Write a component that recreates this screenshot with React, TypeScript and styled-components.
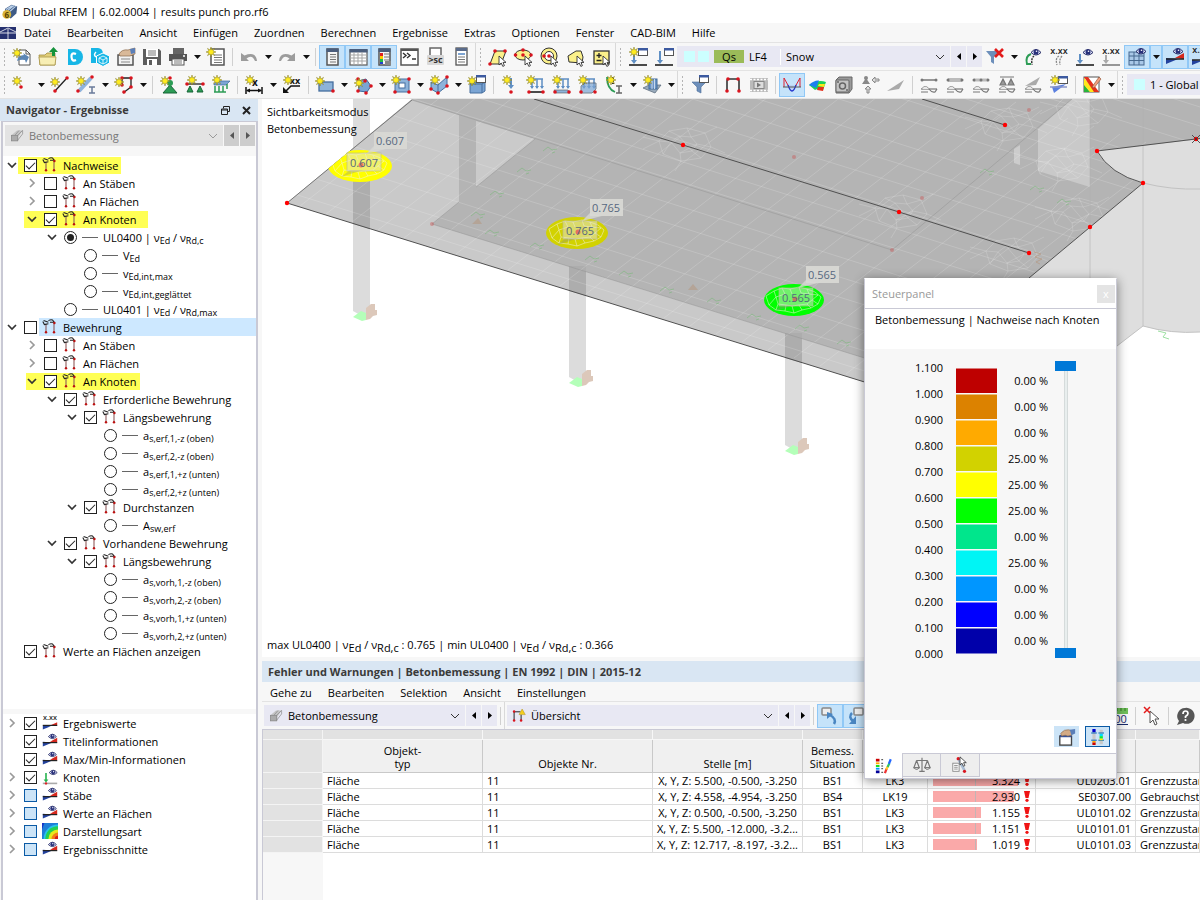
import React from "react";
import styled, { createGlobalStyle, css } from "styled-components";

const FONT = `"Open Sans", "Noto Sans", sans-serif`;
const BAR = "#f7f7f7";
const FRAME = "#c9c9d5";
const FIELD = "#e8e8f3";
const HEAD = "#d9e6f3";
const ACTIVE = "#c5e3fa";
const ACTIVE_EDGE = "#90c8f6";

const Global = createGlobalStyle`
  * { box-sizing: border-box; }
  body { margin: 0; background: ${BAR}; font-family: ${FONT}; font-size: 11px; color: #000; overflow: hidden; }
  button, select, input { font: inherit; color: inherit; margin: 0; padding: 0; border: 0; background: none; border-radius: 0; }
  h1, h2, p, ul { margin: 0; padding: 0; font-size: inherit; font-weight: inherit; list-style: none; }
  svg { display: block; flex: none; overflow: visible; }
`;

/* ---------- icons ---------- */

const Star = ({ x = 0, y = 0 }: { x?: number; y?: number }) => (
  <path
    transform={`translate(${x} ${y})`}
    d="M5 0l.9 3 2.6-1.6L7 4l3 1-3 .9 1.5 2.7L5.9 7 5 10l-.9-3-2.6 1.6L3 5.9 0 5l3-1L1.5 1.4 4.1 3z"
    fill="#ffec1f"
    stroke="#7d7426"
    strokeWidth=".5"
  />
);
const Dot = ({ x, y }: { x: number; y: number }) => <circle cx={x} cy={y} r="1.8" fill="#d9141e" />;
const Eye = ({ x = 9, y = 0 }: { x?: number; y?: number }) => (
  <g transform={`translate(${x} ${y})`}>
    <path d="M0 4.5Q5-1.5 10 4.5Q5 9.5 0 4.5z" fill="#dfe3fb" stroke="#1e2560" />
    <circle cx="5" cy="4" r="2.500" fill="#28307a" />
    <circle cx="5.500" cy="3.300" r=".8" fill="#fff" />
  </g>
);
const Cursor = ({ x = 11, y = 9 }: { x?: number; y?: number }) => (
  <path transform={`translate(${x} ${y})`} d="M0 0v9l2.200-2 1.600 3.400 1.600-.7L4 6.400h3z" fill="#fff" stroke="#333" strokeWidth=".9" />
);
const Arrow = ({ x, y, h = 9, c = "#5f8fc4" }: { x: number; y: number; h?: number; c?: string }) => (
  <path transform={`translate(${x} ${y})`} d={`M-1 0h2v${h - 4}h2l-3 4-3-4h2z`} fill={c} />
);
const Win = ({ x = 10, y = 1 }: { x?: number; y?: number }) => (
  <g transform={`translate(${x} ${y})`}>
    <rect x=".5" y=".5" width="9" height="7" fill="#fff" stroke="#555" />
    <rect x="0" y="0" width="10" height="2.500" fill="#3c5aa0" />
  </g>
);
const Xxx = ({ y = 7 }: { y?: number }) => (
  <text x="10" y={y} fontSize="9" fontWeight="600" textAnchor="middle" fill="#222">x.xx</text>
);
const Loads = ({ a = 0 }: { a?: number }) => (
  <>
    <path d="M4 4h13M6 4v9M11 4v9M16 4v9" stroke="#5f8fc4" strokeWidth="1.500" fill="none" />
    <path d="M4 11l2 3 2-3zM9 11l2 3 2-3zM14 11l2 3 2-3z" fill="#5f8fc4" />
    {a === 0 && <path d="M3 17h14" stroke="#111" strokeWidth="1.500" />}
    {a === 1 && <path d="M2 15h14l2 3H4z" fill="#8db3da" stroke="#555" strokeWidth=".6" />}
    {a === 2 && <path d="M3 11l4-3h11v6l-4 4H3z" fill="#7ba5d4" opacity=".7" stroke="#456" />}
    <Dot x={3} y={17} />
    <Dot x={17} y={17} />
  </>
);
const Beam = ({ top }: { top: React.ReactNode }) => (
  <>
    {top}
    <path d="M2 14h16" stroke="#777" strokeWidth="1.200" />
    <path d="M3 14q3-5 7 0 3 4 6 3l2-3" fill="none" stroke="#777" strokeWidth="1.200" />
    <path d="M3 14q3-5 7 0z" fill="#e8e8e8" />
    <path d="M2 17h7" stroke="#777" />
  </>
);

const icons: Record<string, React.ReactNode> = {
  new: (<><path d="M7 3h7l4 4v11H7z" fill="#fff" stroke="#555" /><path d="M14 3v4h4" fill="none" stroke="#555" /><path d="M5 14q1-6 7-6l-1-2 6 4-3 6-1-3q-4-1-8 1z" fill="#5b86b5" /><Star x={0} y={1} /></>),
  open: (<><path d="M1 8h6l2-2h8v12H2z" fill="#e2cf79" stroke="#a08a3c" strokeWidth=".8" /><path d="M1 10h17l-1 8H2z" fill="#f7eeb4" stroke="#a89447" strokeWidth=".8" /><path d="M14 9V5h-3l4.500-5L20 5h-3v4z" fill="#15933c" /></>),
  dl: (<><path d="M4 2h7a8 8 0 0 1 0 16H4z" fill="#17b6e6" /><path d="M12 13q-4 2-4.500-3T12 7" fill="none" stroke="#fff" strokeWidth="2.200" /></>),
  cube: (<><path d="M1 1h7a6 6 0 0 1 5 5L8 16H1z" fill="#17b6e6" /><path d="M6 10q-3-2 0-5" fill="none" stroke="#fff" strokeWidth="1.500" /><path d="M13 6l6.500 3v7l-6.500 3.500L6.500 16V9z" fill="#17b6e6" stroke="#fff" /><path d="M13 9l4 2v4l-4 2-4-2v-4zM9 11l4 2 4-2M13 13v4" fill="none" stroke="#fff" strokeWidth=".8" /></>),
  boxhand: (<><rect x="2" y="8" width="15" height="10" fill="#f2f2f2" stroke="#555" strokeWidth="1.500" /><path d="M5 12h9M5 15h9" stroke="#888" /><path d="M3 7q3-5 9-4l7-2v6l-5 2H9L4 9z" fill="#d9b999" stroke="#8a6b4f" strokeWidth=".7" /><path d="M14 2l5-1v5l-4 1z" fill="#5b7fb8" /></>),
  winhand: (<><rect x="2" y="9" width="13" height="10" fill="#fff" stroke="#444" strokeWidth="1.500" /><path d="M2 9h13" stroke="#35519a" strokeWidth="2.500" /><path d="M3 6q4-5 9-4l3 1v5l-4 1-3-1-4 1z" fill="#d3ab86" stroke="#8a6b4f" strokeWidth=".7" /><path d="M13 2l6-1v5l-4 2z" fill="#5b7fb8" /></>),
  save: (<><path d="M1 2h16l2 2v14H1z" fill="#5d5d5d" /><rect x="4" y="2" width="12" height="8" fill="#fff" /><path d="M6 4h8M6 6h8M6 8h8" stroke="#777" /><rect x="5" y="12" width="10" height="6" fill="#fff" /><rect x="7" y="13" width="3" height="5" fill="#5d5d5d" /></>),
  print: (<><rect x="5" y="1" width="11" height="6" fill="#666" /><path d="M1 7h18v7H1z" fill="#555" /><rect x="4" y="12" width="12" height="6" fill="#fff" stroke="#555" /><path d="M6 14h8M6 16h8" stroke="#777" /><circle cx="16" cy="9" r="1" fill="#fff" /></>),
  report: (<><rect x="5" y="2" width="13" height="16" fill="#fff" stroke="#555" strokeWidth="1.500" /><path d="M8 8h8M8 10.500h8M8 13h8M8 15.500h8" stroke="#777" /><Star x={0} y={0} /></>),
  undo: (<path d="M2 6v8h8L7.500 11.500Q13 7 16 14h2Q17 4 5.500 8.500z" fill="#9c9c9c" />),
  redo: (<path d="M18 6v8h-8l2.500-2.500Q7 7 4 14H2Q3 4 14.500 8.500z" fill="#9c9c9c" />),
  nav: (<><rect x="5" y="2" width="11" height="16" fill="#f4f4f4" stroke="#555" strokeWidth="1.500" /><rect x="4.500" y="1.500" width="12" height="3.500" fill="#4a5d7c" /><path d="M8 7.500h6M8 10h6M8 12.500h6M8 15h6" stroke="#777" /></>),
  table: (<><rect x="2" y="3" width="17" height="15" fill="#fff" stroke="#666" strokeWidth="1.300" /><rect x="1.500" y="2" width="18" height="3.500" fill="#4a5d7c" /><path d="M2 8h17M2 11h17M2 14h17M6 5v13M10 5v13M14 5v13" stroke="#a5a5a5" /></>),
  panel: (<><rect x="5" y="2" width="11" height="16" fill="#f4f4f4" stroke="#555" strokeWidth="1.500" /><rect x="4.500" y="1.500" width="12" height="3.500" fill="#4a5d7c" /><rect x="6" y="6" width="3" height="3" fill="#d22" /><rect x="6" y="9" width="3" height="3" fill="#fc0" /><rect x="6" y="12" width="3" height="3" fill="#2b4" /><rect x="6" y="15" width="3" height="2" fill="#24c" /><path d="M10 7h5M10 10h5M10 13h5" stroke="#777" /><rect x="11" y="14" width="6" height="4" fill="#888" /></>),
  console: (<><rect x="1" y="2" width="17" height="16" fill="#fff" stroke="#555" strokeWidth="1.500" /><path d="M1 3h17" stroke="#555" strokeWidth="2" /><path d="M3 6l3 2.500L3 11M7 6l3 2.500L7 11M12 12h4" fill="none" stroke="#333" strokeWidth="1.400" /></>),
  script: (<><rect x="4" y="1" width="11" height="8" fill="#fff" stroke="#666" strokeWidth="1.500" /><rect x="1" y="8" width="17" height="10" rx="1" fill="#d8d8d8" /><text x="9.500" y="16" fontSize="9" fontWeight="700" textAnchor="middle" fill="#333">&gt;sc</text></>),
  list: (<><rect x="4" y="1" width="11" height="17" fill="#fff" stroke="#555" strokeWidth="1.300" /><rect x="4" y="1" width="11" height="3" fill="#5a6b8a" /><rect x="6" y="6" width="7" height="2" fill="#7da4d2" /><path d="M6 10h7M6 12.500h7M6 15h7" stroke="#777" /></>),
  selPar: (<><path d="M7 4h11l-5 13H2z" fill="#fbf08a" stroke="#333" /><Dot x={7} y={4} /><Dot x={17} y={4} /><Dot x={2} y={17} /><Cursor /></>),
  selEll: (<><ellipse cx="9" cy="8" rx="8" ry="5" fill="#fbf08a" stroke="#333" /><Dot x={9} y={3} /><Dot x={1.500} y={8} /><Dot x={17} y={8} /><Dot x={9} y={8} /><Cursor /></>),
  selRing: (<><circle cx="9" cy="9" r="8" fill="#fbf08a" stroke="#333" /><circle cx="9" cy="9" r="4.500" fill="#fff" stroke="#333" /><Dot x={9} y={9} /><Dot x={4} y={9} /><Cursor /></>),
  selPoly: (<><path d="M2 9l8-5h5l2 6-1 6-13-1z" fill="#fbf08a" stroke="#333" /><Cursor /></>),
  selPm: (<><rect x="2" y="4" width="15" height="13" fill="#fbf08a" stroke="#333" strokeWidth="1.300" /><path d="M7 6v5M4.500 8.500h5M4.500 13.500h5" stroke="#222" strokeWidth="1.300" /><Cursor /></>),
  loadNew: (<><Arrow x={6} y={6} h={11} /><Win /><path d="M1 18h18" stroke="#111" strokeWidth="1.500" /><Star x={1} y={0} /></>),
  loadWin: (<><Arrow x={6} y={4} h={13} /><Win /><path d="M1 18h18" stroke="#111" strokeWidth="1.500" /></>),
  filterX: (<><path d="M1 4h13l-5 6v7l-3-2v-5z" fill="#6d8fbb" /><path d="M10 2l8 8M18 2l-8 8" stroke="#e31b1b" strokeWidth="2.600" /></>),
  eyeRebar: (<><path d="M8 7q-6 2-4 10h4" fill="none" stroke="#2c9c55" strokeWidth="2" /><path d="M11 9q-3 2-2 9" fill="none" stroke="#333" strokeWidth="1.500" strokeDasharray="2 1" /><Eye x={8} y={1} /></>),
  xxxRebar: (<><Xxx /><path d="M10 9q-4 2-2 9M13 9q-3 3-2 9" fill="none" stroke="#888" strokeWidth="1.300" strokeDasharray="2 1" /></>),
  eyeLoad: (<><Arrow x={5} y={7} h={10} /><path d="M1 18h18" stroke="#111" strokeWidth="1.500" /><Eye x={8} y={1} /></>),
  xxxLoad: (<><Xxx /><Arrow x={5} y={8} h={9} c="#aaa" /><path d="M1 18h18" stroke="#777" strokeWidth="1.500" /></>),
  eyeGrid: (<><rect x="2" y="5" width="15" height="13" fill="#a9c8e8" stroke="#47698f" /><path d="M2 9h15M2 13.500h15M7 5v13M12 5v13" stroke="#47698f" /><Eye x={9} y={0} /></>),
  eyeDiag: (<><path d="M1 11v6l12-5z" fill="#23439f" /><path d="M10 11l9-5v6z" fill="#d5281e" /><path d="M1 12h18" stroke="#222" strokeWidth="1.500" /><Eye x={8} y={0} /></>),
  xxxDiag: (<><Xxx y={6} /><path d="M1 13v5l10-4z" fill="#23439f" /><path d="M10 13l9-4v4z" fill="#d5281e" /><path d="M1 13h18" stroke="#222" strokeWidth="1.500" /></>),
  node: (<><Star x={0} y={1} /><Dot x={9} y={12} /></>),
  line: (<><path d="M5 16L16 4" stroke="#222" strokeWidth="1.300" /><Dot x={5} y={16} /><Dot x={17} y={3} /><Star x={0} y={2} /></>),
  member: (<><path d="M3 16L15 3" stroke="#8fb3dc" strokeWidth="4" /><Dot x={2} y={16} /><Dot x={16} y={2} /><path d="M13 12h6M13 18h6M16 12v6" stroke="#6a7b9a" strokeWidth="1.500" /><Star x={0} y={1} /></>),
  polyline: (<><path d="M8 10V3h9v9l-8 6" fill="none" stroke="#222" strokeWidth="1.300" /><Dot x={8} y={10} /><Dot x={8} y={3} /><Dot x={17} y={3} /><Dot x={17} y={12} /><Dot x={10} y={17} /><Star x={0} y={2} /></>),
  support: (<><path d="M4 18l7-8 7 8z" fill="#2c9c55" stroke="#176437" /><circle cx="11" cy="8" r="3" fill="#2c9c55" /><Dot x={11} y={3} /><Star x={1} y={1} /></>),
  lineSup: (<><path d="M3 9h15" stroke="#222" strokeWidth="1.300" /><path d="M2 17l3-6 3 6zM12 17l3-6 3 6z" fill="#2c9c55" stroke="#176437" /><Dot x={2} y={9} /><Dot x={18} y={9} /><Star x={2} y={0} /></>),
  surfSup: (<><path d="M3 9l4-3h12l-4 4H3z" fill="#7ba5d4" stroke="#3e6a9c" strokeWidth=".7" /><path d="M4 17v-6M8 17v-6M12 17v-6M16 14V9M3 17h12" stroke="#2c9c55" strokeWidth="1.500" /><Star x={1} y={0} /></>),
  dim: (<><path d="M2 12v7M18 12v7M3 15.500h14" stroke="#111" strokeWidth="1.500" /><path d="M2 15.500l4-2v4zM18 15.500l-4-2v4z" fill="#111" /><text x="11" y="11" fontSize="10" fontWeight="700" fill="#111" textAnchor="middle">x</text><Star x={1} y={0} /></>),
  dimArrow: (<><path d="M18 11H9l-6 6" fill="none" stroke="#111" strokeWidth="1.500" /><path d="M1 18v-6l6 6z" fill="#111" /><text x="13" y="9" fontSize="9" fontWeight="700" fill="#111" textAnchor="middle">xx</text><Star x={1} y={0} /></>),
  surf: (<><rect x="4" y="7" width="14" height="9" fill="#8db3da" stroke="#466f9f" strokeWidth="1.300" /><Dot x={18} y={16} /><Star x={0} y={1} /></>),
  surfPoly: (<><path d="M5 6l8-2 5 7-4 6-8-1z" fill="#7ba5d4" stroke="#3e6a9c" /><Dot x={5} y={16} /><Dot x={13} y={18} /><Dot x={18} y={11} /><Dot x={5} y={4} /><Dot x={12} y={6} /><Star x={1} y={3} /></>),
  opening: (<><rect x="4" y="4" width="14" height="13" fill="#8db3da" stroke="#466f9f" /><rect x="8" y="8" width="6" height="5" fill="#fff" stroke="#466f9f" /><Dot x={4} y={17} /><Dot x={18} y={4} /><Dot x={18} y={17} /><Star x={0} y={0} /></>),
  surf3d: (<><path d="M2 7l7 3 9-8v9l-9 7-7-4z" fill="#8db3da" stroke="#466f9f" /><path d="M9 10v8" stroke="#466f9f" /><Dot x={2} y={14} /><Dot x={9} y={18} /><Dot x={18} y={11} /><Dot x={18} y={2} /><Star x={1} y={0} /></>),
  solid: (<><path d="M3 9l3-2h12v9l-3 2H3z" fill="#7ba5d4" stroke="#466f9f" /><path d="M3 9h12v9M15 9l3-2" fill="none" stroke="#466f9f" /><Win x={9} y={0} /><Star x={0} y={1} /></>),
  nLoad: (<><Arrow x={11} y={3} h={11} /><Dot x={11} y={17} /><Star x={2} y={0} /></>),
  lLoad: (<><Loads /><Star x={0} y={0} /></>),
  sLoad: (<><Loads a={1} /><Star x={0} y={0} /></>),
  vLoad: (<><Loads a={2} /><Star x={0} y={0} /></>),
  impf: (<><path d="M3 2q0 12 8 15" fill="none" stroke="#2c9c55" strokeWidth="1.800" /><path d="M9 2v7" stroke="#333" strokeDasharray="2 1" strokeWidth="2" /><path d="M12 11h6M12 18h6M15 11v7" stroke="#666" strokeWidth="1.500" /><Star x={2} y={0} /></>),
  free: (<><path d="M1 13l6-3h12l-6 8z" fill="#9ab" stroke="#567" strokeWidth=".7" /><rect x="7" y="4" width="8" height="10" fill="#6e96c6" stroke="#3e6a9c" /><path d="M10 4v10M12.500 4v10" stroke="#dfeaf6" strokeWidth=".8" /><Star x={1} y={0} /></>),
  filterWin: (<><path d="M2 7h14l-5 5v6l-4-2v-4z" fill="#6d8fbb" stroke="#4b6d99" strokeWidth=".6" /><Win x={9} y={0} /></>),
  frame: (<><path d="M4 17V6q0-2 2-2h8q2 0 2 2v11" fill="none" stroke="#333" strokeWidth="1.600" /><Dot x={4} y={16} /><Dot x={16} y={16} /><Dot x={5} y={4} /><Dot x={15} y={4} /></>),
  film: (<><rect x="1" y="3" width="18" height="14" fill="#bbb" /><path d="M1 4.500h18M1 15.500h18" stroke="#fff" strokeWidth="1.500" strokeDasharray="2 1.500" /><rect x="5" y="6.500" width="10" height="7" fill="#ddd" stroke="#888" /><path d="M8 7.500v5l4-2.500z" fill="#777" /></>),
  results: (<><path d="M2 3v9M2 3l5 9M18 3v9M18 3l-5 9" stroke="#dd2233" fill="none" /><path d="M6 10q4 12 8 0" fill="#bcd3f5" stroke="#2233cc" strokeWidth="1.300" /><path d="M1 12h18" stroke="#555" /></>),
  iso: (<><path d="M1 10q9-6 17-3l-3 8q-5-2-8 0z" fill="#1ad15a" /><path d="M1 10q5-5 10-4.500L8 13z" fill="#1b7ef0" /><path d="M11 9l6 0-1 3-6-1z" fill="#ffe71a" /><path d="M10 12l6 0-1 4-6-1z" fill="#e5301c" /></>),
  dice: (<><path d="M2 5l3-3h13v12l-3 4H2z" fill="#999" stroke="#666" /><rect x="2" y="5" width="13" height="12" rx="1" fill="#c4c4c4" stroke="#666" /><circle cx="8.500" cy="11" r="3" fill="none" stroke="#666" strokeWidth="1.500" /><circle cx="4" cy="7" r="1" fill="#666" /><circle cx="13" cy="15" r="1" fill="#666" /></>),
  react: (<><path d="M2 9l4-6 4 6z" fill="#888" /><circle cx="6" cy="3" r="2" fill="#888" /><path d="M19 4h-4V2l-3 3 3 3V6h4zM7 18v-4H5l3-3 3 3H9v4z" fill="#ddd" stroke="#888" /></>),
  wedge: (<path d="M1 16L18 5l-5 9-6 1z" fill="#aaa" />),
  b1: <Beam top={<><path d="M3 5h14" stroke="#777" strokeWidth="1.500" /><circle cx="3" cy="5" r="1.500" fill="#777" /><circle cx="17" cy="5" r="1.500" fill="#777" /></>} />,
  b2: <Beam top={<><path d="M3 5h14" stroke="#bbb" strokeWidth="4" /><circle cx="3" cy="5" r="1.500" fill="#777" /><circle cx="17" cy="5" r="1.500" fill="#777" /></>} />,
  b3: <Beam top={<><path d="M3 5h14" stroke="#bbb" strokeWidth="3" /><circle cx="3" cy="5" r="1.500" fill="#777" /><circle cx="10" cy="5" r="1.500" fill="#777" /><circle cx="17" cy="5" r="1.500" fill="#777" /></>} />,
  b4: <Beam top={<><path d="M3 2h14M3 10l3-6 3 6zM11 10l3-6 3 6z" stroke="#777" fill="#999" strokeWidth="1.200" /></>} />,
  b5: <Beam top={<path d="M2 11L17 2l-4 8z" fill="#aaa" />} />,
  b6: (<><Win x={9} y={1} /><path d="M3 12l14-3-12 9z" fill="#5a7fe0" /><path d="M1 12h17" stroke="#8a94c8" strokeWidth="1.500" /><Star x={1} y={0} /></>),
  palette: (<><rect x="2" y="2" width="15" height="15" fill="#fff" stroke="#555" /><path d="M2 9v8h6z" fill="#28b43c" /><path d="M2 3v7l6 7h6z" fill="#ffe71a" /><path d="M2 2l10 15h5L6 2z" fill="#e5301c" /><path d="M10 12l7-10 2 2-7 9z" fill="#f0a080" stroke="#8a4b2c" strokeWidth=".6" /></>),
  truss: (<><path d="M5 6v10M15 5v11" stroke="#8a5555" strokeWidth="1.300" /><path d="M1 3l2 4 5-1M2 2l6 2M8 2q4-2 6 0M10 4h6M13 1l3 4" fill="none" stroke="#222" strokeWidth="1.300" /><circle cx="5" cy="16.500" r="1.500" fill="#b11" /><circle cx="15" cy="16.500" r="1.500" fill="#b11" /><circle cx="15.500" cy="5" r="1.500" fill="#b11" /></>),
  eyeNode: (<><Arrow x={5} y={5} h={12} c="#27b34f" /><path d="M1 18h18" stroke="#aaa" strokeWidth="2" /><circle cx="5" cy="18" r="1.500" fill="#d22" /><Eye x={9} y={0} /></>),
  contour: (<><rect width="20" height="20" fill="#1737c8" /><path d="M2 20A18 18 0 0 1 20 2v18z" fill="#27c4e8" /><path d="M4 20A16 16 0 0 1 20 4v16z" fill="#24d052" /><path d="M8 20A12 12 0 0 1 20 8v12z" fill="#e8ea1c" /><path d="M12 20a8 8 0 0 1 8-8v8z" fill="#f57c1a" /><path d="M16 20a4 4 0 0 1 4-4v4z" fill="#d81c1c" /><path d="M3 0h17v3Q6 3 4 20H0V8z" fill="#27c4e8" opacity=".5" /></>),
  concrete: (<><path d="M2 9l8-7h8l-6 9v6H2z" fill="#c4c4c4" /><rect x="2" y="9" width="9" height="8" fill="#ababab" stroke="#888" /><path d="M11 9l7-7v5l-7 9M7 9l6-7" fill="none" stroke="#888" /></>),
  overview: (<><path d="M3 16V4h9M13 8v8" fill="none" stroke="#222" strokeWidth="1.400" /><Dot x={3} y={3.5} /><Dot x={3} y={16.5} /><Dot x={13} y={16.5} /><path d="M10 8l4.500-8L19 8z" fill="#f5cf1f" stroke="#a08512" strokeWidth=".6" /></>),
  jumpUp: (<><rect x="2" y="2" width="9" height="7" rx="1" fill="#eee" stroke="#888" strokeWidth="1.500" /><path d="M14 18q3-5-4-9" fill="none" stroke="#4a86c2" strokeWidth="2.500" /><path d="M7 6v7l6-5z" fill="#4a86c2" /></>),
  jumpDown: (<><rect x="8" y="2" width="9" height="7" rx="1" fill="#eee" stroke="#888" strokeWidth="1.500" /><path d="M6 7q-4 4 1 8" fill="none" stroke="#4a86c2" strokeWidth="2.500" /><path d="M10 10v8H3z" fill="#4a86c2" /></>),
  decimals: (<><rect x="1" y="2" width="18" height="6" fill="#6fbf5a" /><path d="M4 2v3M8 2v3M12 2v3M16 2v3" stroke="#357a25" /><text x="10" y="17" fontSize="11" textAnchor="middle" fill="#1a2b6b">.00</text><path d="M1 18.500h18" stroke="#1a2b6b" /></>),
  pickX: (<><path d="M8 5v12l3-3 2 5 2-1-2-5h4z" fill="#fff" stroke="#555" /><path d="M2 1l6 6M8 1L2 7" stroke="#e31b1b" strokeWidth="1.500" /></>),
  help: (<><path d="M10 2a8 8 0 1 1-2 15l-6 2 2-4A8 8 0 0 1 10 2z" fill="#565656" /><path d="M8 8q0-3 2.500-3T13 7.500Q13 9 10.500 10.500V12" fill="none" stroke="#fff" strokeWidth="1.700" /><circle cx="10.500" cy="14" r="1.100" fill="#fff" /></>),
  spectrum: (<><rect x="1" y="2" width="4" height="3" fill="#c00" /><rect x="1" y="6" width="4" height="2" fill="#fa0" /><rect x="1" y="9" width="4" height="2" fill="#0d0" /><rect x="1" y="12" width="4" height="2" fill="#09f" /><rect x="1" y="15" width="4" height="3" fill="#009" /><path d="M7 3h2M7 7h2M7 10h2M7 13h2M7 17h2" stroke="#222" /><path d="M11 18l2-5" stroke="#e33" strokeWidth="2.500" /><path d="M12.500 14l2-4" stroke="#fc2" strokeWidth="2.500" /><path d="M14 11l2-4" stroke="#2fc36a" strokeWidth="2.500" /><path d="M15.500 7.500l2-5" stroke="#26f" strokeWidth="2.500" /></>),
  scales: (<><path d="M10 2v3M4 5h12M7 17h6M10 5v12M4 5l-3 8h6L4 5M16 5l-3 8h6l-3-8" fill="none" stroke="#777" strokeWidth="1.300" /><path d="M1 13q3 4 6 0zM13 13q3 4 6 0z" fill="#ddd" stroke="#777" /></>),
  memberList: (<><rect x="2" y="8" width="7" height="9" fill="#fff" stroke="#888" /><path d="M3.500 10.500h4M3.500 12.500h4M3.500 14.500h4" stroke="#888" /><path d="M8 3l7 13" stroke="#a9bdd4" strokeWidth="3" /><Dot x={8} y={3} /><Dot x={15} y={17} /><Cursor x={10} y={1} /></>),
  sliders: (<><rect x="3" y="1" width="4" height="18" fill="#c8c8c8" /><rect x="12" y="1" width="4" height="18" fill="#c8c8c8" /><rect x="3" y="0" width="4" height="4" fill="#00c" /><path d="M1.500 5h7M1.500 14h7M10.500 5h7M10.500 14h7" stroke="#0064b4" strokeWidth="1.200" /><rect x="3" y="15" width="4" height="2" fill="#fa0" /><rect x="3" y="17" width="4" height="3" fill="#c00" /><rect x="12" y="6" width="4" height="3" fill="#0df" /><rect x="12" y="9" width="4" height="3" fill="#0e4" /><rect x="12" y="12" width="4" height="2" fill="#fe0" /></>),
  app: (<><path d="M4 6l8-5 7 2-1 9-7 6-8-4z" fill="#3e5b86" /><path d="M5 7l8-5M7 8l8-6M10 9l7-6" stroke="#b9cfe8" strokeWidth="1.500" /><circle cx="6" cy="13" r="5.500" fill="#d9b43a" /><text x="6" y="17" fontSize="10" fontWeight="700" textAnchor="middle" fill="#5a4300">6</text></>),
};

const Icon = ({ n, s = 20 }: { n: string; s?: number }) => (
  <svg width={s} height={s} viewBox="0 0 20 20" aria-hidden="true">{icons[n]}</svg>
);
const CaretIcon = () => (
  <svg width="7" height="4" viewBox="0 0 7 4" aria-hidden="true"><path d="M0 0h7L3.500 4z" fill="#111" /></svg>
);
const Chevron = ({ open, dim, thin }: { open: boolean; dim?: boolean; thin?: boolean }) => (
  <svg width="10" height="10" viewBox="0 0 10 10" aria-hidden="true">
    <path d={open ? "M1 3l4 4 4-4" : "M3 1l4 4-4 4"} fill="none" stroke={dim ? "#9a9a9a" : "#333"} strokeWidth={thin ? 1 : 1.7} />
  </svg>
);
const Tri = ({ left }: { left?: boolean }) => (
  <svg width="4" height="7" viewBox="0 0 4 7" aria-hidden="true"><path d={left ? "M4 0v7L0 3.500z" : "M0 0v7l4-3.500z"} fill="currentColor" /></svg>
);

/* ---------- shell ---------- */

const Page = styled.div`
  display: flex; flex-direction: column; height: 100vh; overflow: hidden; background: ${BAR};
`;
const TitleBar = styled.header`
  display: flex; align-items: center; gap: 5px; height: 23px; padding-left: 2px; background: #fff; flex: none;
  h1 { font-size: 11px; line-height: 16px; }
`;
const MenuBar = styled.nav`
  display: flex; align-items: center; height: 20px; flex: none; border-bottom: 1px solid #e3e3e3; overflow: hidden;
`;
const PaneMenu = styled(MenuBar)` padding-top: 2px; `;
const MenuItem = styled.button`
  padding: 0 8px; line-height: 18px; white-space: nowrap; flex: none;
`;

const ToolRow = styled.div`
  display: flex; height: 28px; flex: none; border-bottom: 1px solid #e3e3e3; overflow: hidden; width: 100%;
`;
const Group = styled.div`
  display: flex; align-items: center; flex: none; border-right: 1px solid #d9d9d9;
  &:last-child { border-right: 0; }
`;
const Handle = styled.span`
  width: 9px; height: 20px; flex: none;
  background: radial-gradient(circle, #b4b4b4 1px, transparent 1px) 0 0 / 9px 4px;
`;
const Divider = styled.span`
  width: 7px; height: 18px; flex: none; background: linear-gradient(#d0d0d0, #d0d0d0) center / 1px 100% no-repeat;
`;
const ToolButton = styled.button<{ $on?: boolean; $w?: number }>`
  display: flex; align-items: center; justify-content: center; width: ${(p) => p.$w ?? 26}px; height: 24px; flex: none;
  ${(p) => p.$on && css`background: ${ACTIVE}; border: 1px solid ${ACTIVE_EDGE};`}
`;
const Stepper = styled.button<{ $dim?: boolean }>`
  display: flex; align-items: center; justify-content: center; width: 15px; height: 21px; margin-left: 1px; flex: none;
  background: ${(p) => (p.$dim ? "#cdcdcd" : FIELD)}; color: ${(p) => (p.$dim ? "#555" : "#000")};
`;
const Field = styled.label<{ $w?: number; $dim?: boolean }>`
  display: flex; align-items: center; height: 21px; padding: 0 5px; gap: 5px;
  background: ${(p) => (p.$dim ? "#e3e3e3" : FIELD)}; color: ${(p) => (p.$dim ? "#777" : "#000")};
  ${(p) => (p.$w ? css`width: ${p.$w}px; flex: none;` : css`flex: 1; min-width: 0;`)}
`;
const Select = styled.select`
  appearance: none; flex: 1; min-width: 0; height: 20px; outline: none; cursor: default;
  &:disabled { opacity: 1; }
`;
const Swatch = styled.span` width: 11px; height: 11px; background: #ccffff; flex: none; `;
const Swatches = styled.span` display: flex; gap: 3px; padding-left: 2px; flex: none; `;
const Tag = styled.span` width: 30px; line-height: 13px; text-align: center; background: #9bbb59; flex: none; `;
const CaseNo = styled.span` width: 32px; border-right: 1px solid #fff; line-height: 16px; `;

const Combo = ({ icon, value, w, dim, children, label }: {
  icon?: string; value: string; w?: number; dim?: boolean; children?: React.ReactNode; label: string;
}) => (
  <>
    <Field $w={w} $dim={dim}>
      {icon && <Icon n={icon} s={14} />}
      {children}
      <Select aria-label={label} disabled={dim} defaultValue={value}><option>{value}</option></Select>
      <Chevron open thin dim={dim} />
    </Field>
    <Stepper $dim={dim} aria-label="Zurück"><Tri left /></Stepper>
    <Stepper $dim={dim} aria-label="Weiter"><Tri /></Stepper>
  </>
);

/* "v" stands for a drop-down arrow, "|" for a divider, a leading "*" for a pressed button */
const Tools = ({ items }: { items: string }) => (
  <>
    {items.split(" ").map((it, i) => {
      if (it === "|") return <Divider key={i} />;
      if (it === "v" || it === "*v") return <ToolButton key={i} $w={12} $on={it === "*v"} aria-label="Mehr"><CaretIcon /></ToolButton>;
      const on = it[0] === "*";
      const n = on ? it.slice(1) : it;
      return <ToolButton key={i} $on={on} aria-label={n}><Icon n={n} /></ToolButton>;
    })}
  </>
);

/* ---------- navigator ---------- */

const Body = styled.div`
  display: grid; grid-template-columns: 258px minmax(0, 1fr); gap: 4px; flex: 1; min-height: 0;
`;
const Navigator = styled.aside` display: flex; flex-direction: column; min-height: 0; `;
const PaneTitle = styled.div<{ $h?: number }>`
  display: flex; align-items: center; height: ${(p) => p.$h ?? 22}px; padding: 0 1px 0 6px; background: ${HEAD}; flex: none;
  h2 { flex: 1; font-weight: 700; color: #3a3a3a; line-height: 16px; white-space: nowrap; }
`;
const PaneButton = styled.button` display: flex; justify-content: center; width: 21px; `;
const NavFrame = styled.div`
  display: flex; flex-direction: column; flex: 1; min-height: 0; margin-left: 1px;
  border: 2px solid ${FRAME}; border-width: 1px 2px 0 2px; background: #fff;
`;
const NavPicker = styled.div`
  display: flex; align-items: flex-start; height: 34px; padding: 3px 1px 0 2px; background: ${BAR}; flex: none;
`;
const Tree = styled.ul<{ $grow?: boolean }>` flex: ${(p) => (p.$grow ? 1 : "none")}; overflow: hidden; `;
const NavDivider = styled.div` height: 5px; background: ${BAR}; flex: none; `;
const NavFoot = styled.div` height: 42px; flex: none; `;
const TreeRow = styled.li<{ $level: number; $mark?: [number, number]; $sel?: boolean }>`
  display: flex; align-items: center; height: 18px; padding-left: ${(p) => p.$level * 20 + 3}px; white-space: nowrap;
  ${(p) => p.$mark && css`background: linear-gradient(#ffff55, #ffff55) ${p.$mark[0]}px 1px / ${p.$mark[1]}px 17px no-repeat;`}
  ${(p) => p.$sel && css`background: linear-gradient(#cde8ff, #cde8ff) 36px 0 / 100% 18px no-repeat;`}
  label { display: flex; align-items: center; gap: 5px; margin-left: 6px; height: 18px; }
`;
const Expander = styled.button` width: 12px; height: 12px; display: flex; align-items: center; justify-content: center; flex: none; `;
const Check = styled.input<{ $partial?: boolean }>`
  appearance: none; width: 13px; height: 13px; flex: none; display: grid; place-items: center;
  border: 1px solid ${(p) => (p.$partial ? "#0a5aa5" : "#222")}; background: ${(p) => (p.$partial ? "#cce4f7" : "#fff")};
  &:checked::after {
    content: ""; width: 8px; height: 4px; border: solid #222; border-width: 0 0 1px 1px; transform: translateY(-1px) rotate(-45deg);
  }
`;
const Radio = styled.input`
  appearance: none; width: 13px; height: 13px; flex: none; display: grid; place-items: center;
  border: 1px solid #222; border-radius: 50%; background: #fff;
  &:checked::after { content: ""; width: 7px; height: 7px; border-radius: 50%; background: #222; }
`;
const Dash = styled.span` width: 16px; height: 1px; background: #666; flex: none; `;
const RowText = styled.span` padding-top: 2px; line-height: 18px; sub { font-size: 9px; line-height: 0; vertical-align: -2px; } `;

type Node = {
  l: number; k: "c" | "r"; t: React.ReactNode; open?: boolean; on?: boolean; icon?: string;
  mark?: [number, number]; sel?: boolean; partial?: boolean;
};
const S = ({ a, b }: { a: string; b: string }) => <>{a}<sub>{b}</sub></>;
const tree: Node[] = [
  { l: 0, k: "c", t: "Nachweise", open: true, on: true, mark: [15, 103] },
  { l: 1, k: "c", t: "An Stäben", open: false },
  { l: 1, k: "c", t: "An Flächen", open: false },
  { l: 1, k: "c", t: "An Knoten", open: true, on: true, mark: [21, 124] },
  { l: 2, k: "r", t: <>UL0400 | <S a="ν" b="Ed" /> / <S a="ν" b="Rd,c" /></>, open: true, on: true },
  { l: 3, k: "r", t: <S a="V" b="Ed" /> },
  { l: 3, k: "r", t: <S a="v" b="Ed,int,max" /> },
  { l: 3, k: "r", t: <S a="v" b="Ed,int,geglättet" /> },
  { l: 2, k: "r", t: <>UL0401 | <S a="ν" b="Ed" /> / <S a="ν" b="Rd,max" /></> },
  { l: 0, k: "c", t: "Bewehrung", open: true, sel: true },
  { l: 1, k: "c", t: "An Stäben", open: false },
  { l: 1, k: "c", t: "An Flächen", open: false },
  { l: 1, k: "c", t: "An Knoten", open: true, on: true, mark: [23, 114] },
  { l: 2, k: "c", t: "Erforderliche Bewehrung", open: true, on: true },
  { l: 3, k: "c", t: "Längsbewehrung", open: true, on: true },
  { l: 4, k: "r", t: <S a="a" b="s,erf,1,-z (oben)" /> },
  { l: 4, k: "r", t: <S a="a" b="s,erf,2,-z (oben)" /> },
  { l: 4, k: "r", t: <S a="a" b="s,erf,1,+z (unten)" /> },
  { l: 4, k: "r", t: <S a="a" b="s,erf,2,+z (unten)" /> },
  { l: 3, k: "c", t: "Durchstanzen", open: true, on: true },
  { l: 4, k: "r", t: <S a="A" b="sw,erf" /> },
  { l: 2, k: "c", t: "Vorhandene Bewehrung", open: true, on: true },
  { l: 3, k: "c", t: "Längsbewehrung", open: true, on: true },
  { l: 4, k: "r", t: <S a="a" b="s,vorh,1,-z (oben)" /> },
  { l: 4, k: "r", t: <S a="a" b="s,vorh,2,-z (oben)" /> },
  { l: 4, k: "r", t: <S a="a" b="s,vorh,1,+z (unten)" /> },
  { l: 4, k: "r", t: <S a="a" b="s,vorh,2,+z (unten)" /> },
  { l: 0, k: "c", t: "Werte an Flächen anzeigen", on: true },
];
const options: Node[] = [
  { l: 0, k: "c", t: "Ergebniswerte", open: false, on: true, icon: "xxxDiag" },
  { l: 0, k: "c", t: "Titelinformationen", on: true, icon: "eyeDiag" },
  { l: 0, k: "c", t: "Max/Min-Informationen", on: true, icon: "eyeDiag" },
  { l: 0, k: "c", t: "Knoten", open: false, on: true, icon: "eyeNode" },
  { l: 0, k: "c", t: "Stäbe", open: false, partial: true, icon: "eyeDiag" },
  { l: 0, k: "c", t: "Werte an Flächen", open: false, partial: true, icon: "eyeDiag" },
  { l: 0, k: "c", t: "Darstellungsart", open: false, partial: true, icon: "contour" },
  { l: 0, k: "c", t: "Ergebnisschnitte", open: false, partial: true, icon: "eyeDiag" },
];
const Branch = ({ n }: { n: Node }) => (
  <TreeRow $level={n.l} $mark={n.mark} $sel={n.sel}>
    <Expander aria-label="Aufklappen">{n.open !== undefined && <Chevron open={n.open} dim={!n.open} />}</Expander>
    <label>
      {n.k === "c" ? <Check type="checkbox" defaultChecked={n.on} $partial={n.partial} /> : <Radio type="radio" defaultChecked={n.on} />}
      {n.k === "c" ? <Icon n={n.icon ?? "truss"} s={16} /> : <Dash />}
      <RowText>{n.t}</RowText>
    </label>
  </TreeRow>
);

/* ---------- model view ---------- */

const Main = styled.main` position: relative; display: flex; flex-direction: column; min-width: 0; min-height: 0; `;
const View = styled.section`
  display: grid; flex: 1; min-height: 0; background: #fff; overflow: hidden;
  > * { grid-area: 1 / 1; }
`;
const Scene = styled.svg` width: 100%; height: 100%; overflow: hidden; `;
const ViewNotes = styled.div`
  display: flex; flex-direction: column; justify-content: space-between; padding: 4px 5px; z-index: 1;
  p { line-height: 17px; }
  sub { font-size: 11px; line-height: 0; vertical-align: -3px; }
`;

const redDots = [[287, 203], [683, 145], [899, 212], [1029, 253], [1005, 125], [1097, 151], [1196, 139], [1143, 183], [1090, 227]];
const faintDots = [[432, 224], [892, 250], [794, 157], [922, 198], [1029, 110]];
const ticks = [[548, 149], [522, 170], [495, 193], [476, 214], [490, 232], [535, 245], [590, 258], [624, 273], [665, 289], [712, 300], [752, 316], [800, 327], [842, 342], [985, 171], [1035, 188], [1062, 201]];
const meshCores = [[683, 145], [899, 212], [1005, 125], [1010, 255], [1075, 215], [1080, 110], [1060, 165]];
const punches = [
  { x: 360, y: 166, rx: 32, ry: 16, c: "#ffff00", v: "0.607", up: [374, 132], in: [347, 153] },
  { x: 577, y: 233, rx: 31, ry: 16, c: "#d2d200", v: "0.765", up: [590, 199], in: [563, 221] },
  { x: 794, y: 300, rx: 30, ry: 16, c: "#00ff00", v: "0.565", up: [806, 266], in: [779, 288] },
];
const rows = Array.from({ length: 46 }, (_, i) => i);

const ModelScene = () => (
  <Scene role="img" aria-label="Modell">
    <defs>
      <clipPath id="slab"><path d="M287 203L412 99H1200V139L1097 151Q1110 174 1143 183L1029 278 900 393z" /></clipPath>
      <clipPath id="punch"><path d="M287 203L412 99H1200V500H900z" /></clipPath>
    </defs>
    <g transform="translate(-262 -99)">
      {[[353, 99, 211], [569, 266, 110], [785, 334, 110]].map(([x, y, h]) => (
        <g key={x}>
          <path d={`M${x} ${y}h17v${h + 3}l-8 3-9-5z`} fill="#dcdcdc" />
          <path d={`M${x} ${y + h + 7}l8-6 5 2v7l-4 1z`} fill="#b4ffb9" />
          <path d={`M${x + 13} ${y + h - 2}l5-4h4v6h2v5l-4 1-3 3-4 1z`} fill="#dcc8ba" />
        </g>
      ))}
      <path d="M1097 151L1200 138.500V332Q1170 334 1143 326L1117 346 1029 278 1143 183Q1110 174 1097 151z" fill="#dedede" />
      <path d="M287 203L412 99H1200V139L1097 151Q1110 174 1143 183L1029 278 900 393z" fill="#b4b4b4" />
      <path d="M287 203L412 100 459 115V202L432 224 900 369V393z" fill="#c9c9c9" />
      <path d="M476 121L535 139 476 187z" fill="#cacaca" />
      <path d="M1038 129L1072 99H1090V187L1038 171z" fill="#c9c9c9" />
      <path d="M1014 149l6-4v20l-6-2z" fill="#cccccc" />
      <path d="M353 176h17v53l-17-5zM569 266h17v30l-17-5zM785 333h17v30l-17-5z" fill="#adadad" />
      <g clipPath="url(#slab)" stroke="#fff" strokeOpacity=".17" fill="none">
        {rows.map((i) => <path key={i} d={`M262 ${180 - i * 22 + 4}L1200 ${475 - i * 22 + (i % 3) * 3}`} />)}
        {rows.map((i) => <path key={`c${i}`} d={`M${300 + i * 26} ${206 + i * 8}l300 -232`} />)}
        {meshCores.map(([x, y]) => (
          <g key={x} transform={`translate(${x} ${y})`}>
            <path d="M-12-3L-4-9 8-8 14-1 9 6-3 8zM-24-4L-14-14 4-17 22-12 28 2 18 13-2 16-20 9z" />
            <path d="M-40-8L-24-4-12-3M-14-14L-4-9M4-17L8-8M22-12L8-8M28 2L14-1M18 13L9 6M-2 16L-3 8M-20 9L-12-3M-4-9L9 6M14-1L-3 8M-24-4L-40 4M28 2L42 8M22-12L34-18M-2 16L-8 26" />
          </g>
        ))}
      </g>
      <path d="M412 100L892 250 1072 99M432 224L900 369M432 224l27-22M476 187l59-48" fill="none" stroke="#949494" strokeOpacity=".5" />
      <path d="M1090 99V278M1143 99V326" stroke="#b0b0b0" strokeWidth="1" strokeOpacity=".6" />
      <path d="M1143 183q28 7 57 6M1143 326q28 8 57 6" fill="none" stroke="#c2c2c2" />
      <path d="M1143 326l-26 20" stroke="#c2c2c2" />
      <path d="M287 203L412 100" stroke="#777" />
      <path d="M287 203L900 393M534 99L683 145 899 212 1029 253M922 99l83 26M1200 138.500L1097 151Q1110 174 1143 183L1029 278" fill="none" stroke="#444" strokeWidth=".9" />
      {ticks.map(([x, y]) => <path key={x} d={`M${x - 5} ${y + 2}l5-4 4 3 5-1M${x + 4} ${y + 4}l3-1`} fill="none" stroke="#76b876" strokeOpacity=".55" />)}
      <path d="M1158 331l8 2-3 4 6 2" fill="none" stroke="#9de0a2" />
      <path d="M472 224l6-6 4 6zM688 290l5-6 5 6z" fill="#b49c8a" opacity=".7" />
      <path d="M1034 252l7 2-6 3 7 2-6 3 4 2" fill="none" stroke="#b49c8a" opacity=".8" />
      <g clipPath="url(#punch)">
        {punches.map((p) => (
          <g key={p.v}>
            <ellipse cx={p.x} cy={p.y} rx={p.rx} ry={p.ry} fill={p.c} />
            <path
              transform={`translate(${p.x} ${p.y})`}
              d="M-28-4L-20-9-12-12-4-11 5-13 13-11 21-8 27-3 24 4 17 8 8 10 0 13-9 11-18 10-25 5zM-20-9l2 6-7 8M-12-12l3 6-9 3M-4-11l2 5M5-13l2 6 8 1M13-11l2 5 9 1M24-5l-6 5 6 4M17 8l-4-4 5-4M8 10l-3-5 8-1M0 13l-2-7 7-1M-9 11l1-6 6 1M-18 10l2-6 8 1M-18-3l2 7"
              fill="none" stroke="#f2f2dc" strokeOpacity=".65" strokeWidth=".8"
            />
          </g>
        ))}
      </g>
      {punches.map((p) => (
        <g key={p.v} fontSize="11" fill="#56687f">
          <path d={`M${p.up[0]} ${p.up[1] + 14}l-8 8 20-5z`} fill="#d8d8d4" opacity=".8" />
          <path d={`M${p.in[0] + 3} ${p.in[1] + 17}l-9 7 22-7z`} fill="#8a8f80" opacity=".35" />
          <rect x={p.up[0]} y={p.up[1]} width="33" height="17" fill="#d8d8d4" opacity=".95" />
          <rect x={p.in[0]} y={p.in[1]} width="34" height="18" fill="#e2e2d8" fillOpacity=".5" stroke="#b9b99a" strokeOpacity=".6" />
          <circle cx={p.x + 1} cy={p.y - 1} r="2.500" fill="#ee4455" opacity=".7" />
          <text x={p.up[0] + 2} y={p.up[1] + 13}>{p.v}</text>
          <text x={p.in[0] + 3} y={p.in[1] + 14}>{p.v}</text>
        </g>
      ))}
      {redDots.map(([x, y]) => <circle key={x} cx={x} cy={y} r="2.200" fill="#ff0000" />)}
      {faintDots.map(([x, y]) => <circle key={x} cx={x} cy={y} r="2" fill="#c86060" opacity=".5" />)}
      <path d="M1192 135l8 8M1192 143l8-8" stroke="#333" strokeWidth=".8" />
    </g>
  </Scene>
);

/* ---------- result table ---------- */

const Results = styled.section` display: flex; flex-direction: column; height: 243px; flex: none; border-top: 4px solid ${BAR}; `;
const ResultTools = styled(ToolRow)` border-bottom: 0; padding-left: 2px; height: 27px; `;
const Gap = styled.span<{ $w: number }>` width: ${(p) => p.$w}px; flex: none; `;
const Sheet = styled.div`
  flex: 1; min-height: 0; overflow: hidden; border-left: 1px solid ${FRAME}; border-top: 1px solid ${FRAME};
  background: linear-gradient(to right, ${BAR} 60px, #fff 60px);
`;
const Table = styled.table`
  table-layout: fixed; width: 100%; min-width: 937px; border-collapse: separate; border-spacing: 0;
  th, td { padding: 0 4px; font-weight: 400; line-height: 15px; white-space: nowrap; overflow: hidden; border-right: 1px solid #dcdcdc; border-bottom: 1px solid #dcdcdc; }
  td { height: 16px; background: #fff; }
  tr > :first-child { background: #e2e2e2; border-color: #f4f4f4; }
`;
const StripRow = styled.tr` th { height: 10px; line-height: 8px; background: #e2e2e2; border-color: #f7f7f7; } `;
const HeadRow = styled.tr`
  th { height: 33px; line-height: 13px; background: #f0f0f0; vertical-align: bottom; padding-bottom: 2px; border-color: #c9c9c9; white-space: pre-line; }
`;
const Cell = styled.td<{ $a?: string }>` text-align: ${(p) => p.$a ?? "left"}; `;
const Ratio = styled.div`
  display: grid; grid-template-columns: 87px 1fr; align-items: center; height: 15px; padding-left: 1px;
`;
const RatioIcon = styled.span` padding-left: 4px; `;
const BarCell = styled.div`
  display: grid; align-items: center; grid-template-columns: 87px;
  > * { grid-area: 1 / 1; }
  span { text-align: right; z-index: 1; }
`;
const Bar = styled.div`
  height: 11px; background: linear-gradient(#c4b4b4, #c4b4b4) 42px 0 / 1px 100% no-repeat #faa9a9;
`;
const data: [string, string, string, number, string, string, string][] = [
  ["X, Y, Z: 5.500, -0.500, -3.250", "BS1", "LK3", 85, "3.324", "UL0203.01", "Grenzzustand der Tragfähigkeit"],
  ["X, Y, Z: 4.558, -4.954, -3.250", "BS4", "LK19", 81, "2.930", "SE0307.00", "Gebrauchstauglichkeit"],
  ["X, Y, Z: 0.500, -0.500, -3.250", "BS1", "LK3", 48, "1.155", "UL0101.02", "Grenzzustand der Tragfähigkeit"],
  ["X, Y, Z: 5.500, -12.000, -3.2...", "BS1", "LK3", 48, "1.151", "UL0101.01", "Grenzzustand der Tragfähigkeit"],
  ["X, Y, Z: 12.717, -8.197, -3.2...", "BS1", "LK3", 44, "1.019", "UL0101.03", "Grenzzustand der Tragfähigkeit"],
];
const Warn = () => (
  <svg width="6" height="11" viewBox="0 0 6 11" aria-label="Warnung"><path d="M0 0h6L4.500 7h-3z" fill="#f01414" /><circle cx="3" cy="9.300" r="1.600" fill="#f01414" /></svg>
);

/* ---------- control panel ---------- */

const Panel = styled.section`
  position: absolute; right: 83px; top: 179px; width: 253px; display: flex; flex-direction: column;
  background: #fff; border: 1px solid ${FRAME}; border-top-color: #fff; box-shadow: 0 2px 10px rgba(0, 0, 0, 0.45); z-index: 2;
`;
const PanelTitle = styled.div`
  display: flex; align-items: center; justify-content: space-between; height: 30px; padding: 0 1px 0 7px;
  border-bottom: 1px solid ${FRAME}; color: #999;
`;
const CloseButton = styled.button` width: 18px; height: 18px; background: #e4e4e4; color: #fff; line-height: 16px; `;
const PanelCaption = styled.p` height: 40px; padding: 3px 10px; line-height: 16px; `;
const Legend = styled.div`
  display: grid; grid-template-columns: 78px 13px 41px 51px 20px 21px; height: 371px; padding-top: 12px; background: ${BAR};
`;
const Levels = styled.div` grid-column: 1; margin-top: -6px; line-height: 26px; text-align: right; `;
const Blocks = styled.div` grid-column: 3; padding-top: 7px; `;
const Block = styled.div<{ $c: string }>`
  height: 26px; background: ${(p) => p.$c}; border: solid rgba(247, 247, 247, 0.5); border-width: 1px 0;
  & + & { box-shadow: 0 -1px 0 ${BAR}; }
`;
const Shares = styled.div` grid-column: 4; padding-top: 7px; text-align: right; line-height: 26px; `;
const RangePair = styled.div`
  grid-column: 6; display: grid; width: 21px; height: 297px; margin-left: -13px;
  background: linear-gradient(to right, #d5dbdb 1px, #e8eeee 1px 3px, #d5dbdb 3px) center / 4px 100% no-repeat;
`;
const Range = styled.input`
  grid-area: 1 / 1; appearance: none; writing-mode: vertical-lr; direction: rtl; width: 21px; height: 297px; pointer-events: none;
  &::-webkit-slider-thumb { appearance: none; width: 21px; height: 10px; background: #0078d7; border: 0; border-radius: 0; pointer-events: auto; }
`;
const PanelActions = styled.div` display: flex; justify-content: flex-end; align-items: center; gap: 6px; height: 33px; padding-right: 6px; `;
const Action = styled.button<{ $on?: boolean }>`
  display: flex; align-items: center; justify-content: center; width: 25px; height: 21px; background: #cce4f7;
  border: 1px solid ${(p) => (p.$on ? "#0a5aa5" : "#cce4f7")};
`;
const TabStrip = styled.div` display: flex; height: 25px; background: ${BAR}; `;
const Tab = styled.button<{ $on?: boolean; $w: number }>`
  display: flex; align-items: center; justify-content: center; width: ${(p) => p.$w}px; height: ${(p) => (p.$on ? 25 : 24)}px;
  background: ${(p) => (p.$on ? "#fff" : "#eeeeee")};
  border: solid ${FRAME}; border-width: ${(p) => (p.$on ? "0 1px 0 0" : "1px 1px 1px 0")};
`;
const TabRest = styled.span` flex: 1; border-top: 1px solid ${FRAME}; `;

const colors = ["#be0000", "#dc8200", "#ffaa00", "#d2d200", "#ffff00", "#00ff00", "#00e68c", "#00f5f5", "#0096ff", "#0000ff", "#0000aa"];
const levels = ["1.100", "1.000", "0.900", "0.800", "0.700", "0.600", "0.500", "0.400", "0.300", "0.200", "0.100", "0.000"];
const shares = ["0.00 %", "0.00 %", "0.00 %", "25.00 %", "25.00 %", "25.00 %", "0.00 %", "25.00 %", "0.00 %", "0.00 %", "0.00 %"];

const Nu = () => <>ν<sub>Ed</sub> / ν<sub>Rd,c</sub></>;

export default function App() {
  return (
    <Page>
      <Global />
      <TitleBar><Icon n="app" s={16} /><h1>Dlubal RFEM | 6.02.0004 | results punch pro.rf6</h1></TitleBar>
      <MenuBar>
        <svg width="16" height="12" viewBox="0 0 16 12" aria-hidden="true"><rect width="16" height="12" fill="#25306f" /><path d="M0 6h16M8 2v10M0 5l8-4 8 4" stroke="#fff" strokeWidth=".8" fill="none" /></svg>
        {["Datei", "Bearbeiten", "Ansicht", "Einfügen", "Zuordnen", "Berechnen", "Ergebnisse", "Extras", "Optionen", "Fenster", "CAD-BIM", "Hilfe"].map((m) => <MenuItem key={m}>{m}</MenuItem>)}
      </MenuBar>
      <ToolRow>
        <Group><Handle /><Tools items="new open dl cube boxhand save print v report | undo v redo v | *nav *table *panel console script list" /></Group>
        <Group><Handle /><Tools items="selPar selEll selRing selPoly selPm" /></Group>
        <Group>
          <Handle /><Tools items="loadNew loadWin" />
          <Combo label="Lastfall" value="Snow" w={273}>
            <Swatches><Swatch /><Swatch /></Swatches><Tag>Qs</Tag><CaseNo>LF4</CaseNo>
          </Combo>
          <Tools items="filterX v eyeRebar xxxRebar eyeLoad xxxLoad *eyeGrid *v *eyeDiag *xxxDiag" />
        </Group>
      </ToolRow>
      <ToolRow>
        <Group><Handle /><Tools items="node v line member v polyline v | support lineSup surfSup | dim v dimArrow | surf v surfPoly v opening v surf3d v solid | nLoad lLoad sLoad vLoad impf v free v" /></Group>
        <Group><Handle /><Tools items="filterWin | frame film | *results iso dice react wedge | b1 b2 b3 b4 b5 b6 | palette v" /></Group>
        <Group>
          <Handle />
          <Combo label="Koordinatensystem" value="1 - Global XYZ" w={200}><Swatches><Swatch /></Swatches></Combo>
        </Group>
      </ToolRow>
      <Body>
        <Navigator>
          <PaneTitle>
            <h2>Navigator - Ergebnisse</h2>
            <PaneButton aria-label="Andocken"><svg width="9" height="9" viewBox="0 0 9 9"><path d="M2.500 2.500v-2h6v5h-2M.5 3h6v5.500h-6zM.5 4h6" fill="none" stroke="#222" /></svg></PaneButton>
            <PaneButton aria-label="Schließen"><svg width="9" height="9" viewBox="0 0 9 9"><path d="M1 1l7 7M8 1L1 8" stroke="#222" strokeWidth="2" /></svg></PaneButton>
          </PaneTitle>
          <NavFrame>
            <NavPicker><Combo label="Bemessung" icon="concrete" value="Betonbemessung" dim /></NavPicker>
            <Tree $grow>{tree.map((n, i) => <Branch key={i} n={n} />)}</Tree>
            <NavDivider />
            <Tree>{options.map((n, i) => <Branch key={i} n={n} />)}</Tree>
            <NavFoot />
          </NavFrame>
        </Navigator>
        <Main>
          <View>
            <ModelScene />
            <ViewNotes>
              <div><p>Sichtbarkeitsmodus</p><p>Betonbemessung</p></div>
              <p>max UL0400 | <Nu /> : 0.765 | min UL0400 | <Nu /> : 0.366</p>
            </ViewNotes>
          </View>
          <Results>
            <PaneTitle $h={21}><h2>Fehler und Warnungen | Betonbemessung | EN 1992 | DIN | 2015-12</h2></PaneTitle>
            <PaneMenu>{["Gehe zu", "Bearbeiten", "Selektion", "Ansicht", "Einstellungen"].map((m) => <MenuItem key={m}>{m}</MenuItem>)}</PaneMenu>
            <ResultTools>
              <Group><Combo label="Bemessung" icon="concrete" value="Betonbemessung" w={201} /><Divider /></Group>
              <Group>
                <Gap $w={2} />
                <Combo label="Tabelle" icon="overview" value="Übersicht" w={271} />
                <Divider /><Tools items="*jumpUp *jumpDown" /><Gap $w={237} /><Tools items="decimals | pickX | help" />
              </Group>
            </ResultTools>
            <Sheet>
              <Table>
                <colgroup>{[60, 160, 170, 150, 60, 65, 108, 100].map((w, i) => <col key={i} width={w} />)}<col /></colgroup>
                <thead>
                  <StripRow>{Array.from({ length: 9 }, (_, i) => <th key={i} />)}</StripRow>
                  <HeadRow>
                    <th /><th>{"Objekt-\ntyp"}</th><th>Objekte Nr.</th><th>Stelle [m]</th><th>{"Bemess.\nSituation"}</th><th /><th /><th /><th />
                  </HeadRow>
                </thead>
                <tbody>
                  {data.map(([pos, bs, lk, w, v, id, txt]) => (
                    <tr key={pos}>
                      <td /><Cell>Fläche</Cell><Cell>11</Cell><Cell $a="center">{pos}</Cell><Cell $a="center">{bs}</Cell><Cell $a="center">{lk}</Cell>
                      <Cell><Ratio><BarCell><Bar style={{ width: w }} /><span>{v}</span></BarCell><RatioIcon><Warn /></RatioIcon></Ratio></Cell>
                      <Cell $a="right">{id}</Cell><Cell>{txt}</Cell>
                    </tr>
                  ))}
                </tbody>
              </Table>
            </Sheet>
          </Results>
          <Panel>
            <PanelTitle><h2>Steuerpanel</h2><CloseButton aria-label="Schließen">x</CloseButton></PanelTitle>
            <PanelCaption>Betonbemessung | Nachweise nach Knoten</PanelCaption>
            <Legend>
              <Levels>{levels.map((l) => <div key={l}>{l}</div>)}</Levels>
              <Blocks>{colors.map((c) => <Block key={c} $c={c} />)}</Blocks>
              <Shares>{shares.map((s, i) => <div key={i}>{s}</div>)}</Shares>
              <RangePair>
                <Range type="range" aria-label="Obergrenze" min={0} max={100} defaultValue={100} />
                <Range type="range" aria-label="Untergrenze" min={0} max={100} defaultValue={0} />
              </RangePair>
            </Legend>
            <PanelActions>
              <Action aria-label="Einstellungen"><Icon n="winhand" s={18} /></Action>
              <Action $on aria-label="Bereiche"><Icon n="sliders" s={16} /></Action>
            </PanelActions>
            <TabStrip>
              <Tab $w={38} $on aria-label="Farben"><Icon n="spectrum" s={18} /></Tab>
              <Tab $w={38} aria-label="Faktoren"><Icon n="scales" s={18} /></Tab>
              <Tab $w={39} aria-label="Filter"><Icon n="memberList" s={18} /></Tab>
              <TabRest />
            </TabStrip>
          </Panel>
        </Main>
      </Body>
    </Page>
  );
}
